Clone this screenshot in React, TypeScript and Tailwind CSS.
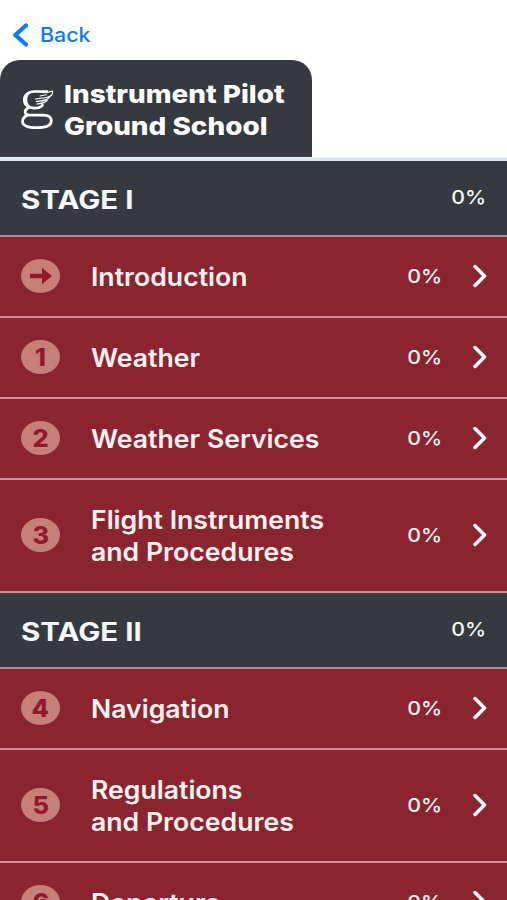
import { clsx } from "clsx";

interface Lesson {
	badge: string;
	title: string[];
	progress: number;
}

interface Stage {
	name: string;
	progress: number;
	lessons: Lesson[];
}

const stages: Stage[] = [
	{
		name: "STAGE I",
		progress: 0,
		lessons: [
			{ badge: "arrow", title: ["Introduction"], progress: 0 },
			{ badge: "1", title: ["Weather"], progress: 0 },
			{ badge: "2", title: ["Weather Services"], progress: 0 },
			{
				badge: "3",
				title: ["Flight Instruments", "and Procedures"],
				progress: 0,
			},
		],
	},
	{
		name: "STAGE II",
		progress: 0,
		lessons: [
			{ badge: "4", title: ["Navigation"], progress: 0 },
			{ badge: "5", title: ["Regulations", "and Procedures"], progress: 0 },
			{ badge: "6", title: ["Departure"], progress: 0 },
		],
	},
];

function Logo() {
	return (
		<svg
			viewBox="0 0 34 44"
			className="w-[34px] h-11 shrink-0"
			fill="none"
			stroke="#fff"
			strokeLinecap="round"
			strokeLinejoin="round"
		>
			{/* Bowl */}
			<path
				d="M27 4.500H14.500C8 4.500 4.300 8.200 4.300 12.700C4.300 17.700 8.500 21.200 14 21.200C18 21.200 21 20.200 22.500 18.200"
				strokeWidth="2.700"
			/>
			<path
				d="M11 5.200C7.500 6.700 6.200 9.700 6.200 12.700C6.200 15.700 7.500 18.200 10 20.200"
				strokeWidth="2"
			/>
			{/* Lower loop */}
			<path
				d="M8 21C4 23.200 4 28.200 9.500 28.200H23C28.500 28.200 31.300 30.500 31.300 34C31.300 38.500 26 40.700 17 40.700C8 40.700 2.500 38.800 2.500 34.500C2.500 31.500 4.500 29.500 7.500 28"
				strokeWidth="2.700"
			/>
			{/* Wing */}
			<path
				d="M20 5.200C25 6.200 29 5.200 32.500 4C33.300 7.500 31 9.700 26.500 10.500L15.500 12"
				strokeWidth="1.200"
			/>
			<path d="M29.500 10C28 12.500 25.500 13.500 16.500 14.500" strokeWidth="1.400" />
			<path d="M27 13.500C25 15.800 22 16.500 17 17" strokeWidth="1.200" />
			<path d="M26.500 7.700L20 9" strokeWidth="1" />
		</svg>
	);
}

function Badge({ label }: { label: string }) {
	return (
		<div className="w-[39px] h-[34px] mb-px shrink-0 rounded-[50%] bg-[#c58079] flex items-center justify-center text-[#93192a]">
			{label === "arrow" ? (
				<svg viewBox="0 0 22 18" className="w-[22px] h-[18px]">
					<path d="M0 6.700H12V0.800L22 9L12 17.200V11.300H0Z" fill="currentColor" />
				</svg>
			) : (
				<span className="mt-px text-[24px] leading-none font-extrabold scale-x-106">
					{label}
				</span>
			)}
		</div>
	);
}

function Progress({ value }: { value: number }) {
	return (
		<span className="text-[19px] leading-6 font-medium origin-right scale-x-[1.12]">
			{value}%
		</span>
	);
}

function LessonRow({ lesson }: { lesson: Lesson }) {
	return (
		<div
			className={clsx(
				"flex items-center pl-[21px] pr-5 bg-[#8a2530] border-b-2 border-[#cb9294] text-[#fff3f0]",
				lesson.title.length > 1 ? "h-[113px]" : "h-[81px]"
			)}
		>
			<Badge label={lesson.badge} />
			<div className="flex-1 ml-[31px] text-[25px] leading-8 font-semibold whitespace-nowrap origin-left scale-x-[1.065]">
				{lesson.title.map((line) => (
					<div key={line}>{line}</div>
				))}
			</div>
			<Progress value={lesson.progress} />
			<svg
				viewBox="0 0 14 24"
				className="w-3.5 h-6 ml-[31px] mb-px shrink-0"
				fill="none"
				stroke="#fff"
				strokeWidth="3.500"
				strokeLinecap="round"
				strokeLinejoin="round"
			>
				<path d="M2 2.500L11.500 12L2 21.500" />
			</svg>
		</div>
	);
}

export default function App() {
	return (
		<div className="w-full h-[900px] overflow-hidden bg-white font-['Inter','Liberation_Sans',sans-serif]">
			{/* Navigation */}
			<div className="h-[60px] pt-2.5 pl-3 flex items-center text-[#0a7aff]">
				<svg
					viewBox="0 0 16 24"
					className="w-4 h-6 shrink-0"
					fill="none"
					stroke="currentColor"
					strokeWidth="4.200"
					strokeLinecap="round"
					strokeLinejoin="round"
				>
					<path d="M14 2.500L3.300 12L14 21.500" />
				</svg>
				<span className="ml-3 text-[20px] leading-6 font-medium origin-left scale-x-[1.07]">
					Back
				</span>
			</div>

			{/* Course tab */}
			<div className="w-[312px] h-[97px] pl-5 flex items-center rounded-t-[20px] bg-[#363a40] text-white">
				<Logo />
				<h1 className="mt-0.5 ml-2.5 text-[25px] leading-8 font-extrabold whitespace-nowrap origin-left scale-x-[1.115]">
					Instrument Pilot
					<br />
					Ground School
				</h1>
			</div>
			<div className="h-1 bg-[#dce5ea] border-t border-[#f0f4f6]" />

			{stages.map((stage) => (
				<section key={stage.name}>
					<div className="h-[76px] px-[21px] flex items-center justify-between bg-[#363a40] border-b-2 border-[#a08f93] text-[#f4f7fa]">
						<h2 className="mt-1 text-[25px] leading-8 font-bold origin-left scale-x-[1.18]">
							{stage.name}
						</h2>
						<Progress value={stage.progress} />
					</div>
					{stage.lessons.map((lesson) => (
						<LessonRow key={lesson.badge} lesson={lesson} />
					))}
				</section>
			))}
		</div>
	);
}
